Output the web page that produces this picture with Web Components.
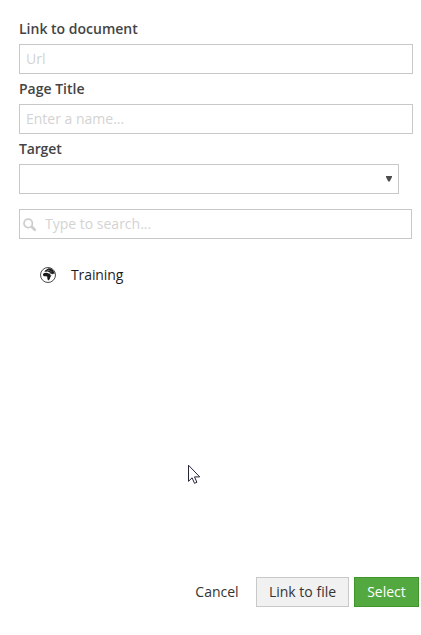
<!DOCTYPE html>
<html lang="en">
<head>
<meta charset="utf-8">
<title>Link picker</title>
<style>
html,body{margin:0;height:100%;background:#fff;overflow:hidden}
body{font:14px/20px "Open Sans","Noto Sans",sans-serif;color:#343434}
</style>
</head>
<body>
<link-dialog></link-dialog>
<script>
const define = (name, html) => customElements.define(name, class extends HTMLElement {
  constructor() {
    super();
    const t = document.createElement('template');
    t.innerHTML = html;
    this.attachShadow({mode: 'open'}).appendChild(t.content.cloneNode(true));
  }
  connectedCallback() {
    const input = this.shadowRoot.querySelector('input');
    if (input) input.placeholder = this.getAttribute('placeholder') || '';
  }
});
const inputCss = `
  input{display:block;box-sizing:border-box;width:100%;height:30px;margin:0;padding:0 6px 2px;border:1px solid #c8c8c8;
    border-radius:0;background:#fff;font:inherit;color:#343434;outline:0}
  input::placeholder{color:#d3d3d3;opacity:1}`;

define('form-field', `<style>
  :host{display:block;height:60px}
  .label{display:block;height:20px;margin-bottom:5px;font-weight:600;color:#444}
</style><span class="label"><slot name="label"></slot></span><slot></slot>`);

define('text-input', `<style>:host{display:block;width:394px}${inputCss}</style><input type="text">`);

define('select-box', `<style>
  :host{display:flex;box-sizing:border-box;width:380px;height:30px;border:1px solid #c8c8c8;align-items:center;justify-content:flex-end;padding-right:6px}
  svg{display:block}
</style><svg width="6" height="6" viewBox="0 0 6 6"><path d="M0 0H6V1L3.7 5.6H2.3L0 1Z" fill="#4c4c4c"/></svg>`);

define('search-input', `<style>
  :host{display:grid;width:393px;height:30px;align-items:center}
  input,svg{grid-area:1/1}
  ${inputCss}
  input{padding-left:25px}
  svg{margin-left:4px;z-index:1;margin-top:2px}
</style><input type="text"><svg width="14" height="14" viewBox="0 0 14 14" fill="none" stroke="#cdcdcd"><circle cx="5.2" cy="5.4" r="4.2" stroke-width="1.7"/><path d="M8.8 8.8L11.7 11.7" stroke-width="2.7" stroke-linecap="round"/></svg>`);

define('tree-item', `<style>
  :host{display:flex;align-items:center;height:20px;padding-left:21px;gap:15px;color:#1d1d1d}
  svg{display:block}
</style><svg width="16" height="16" viewBox="0 0 16 16">
  <circle cx="8" cy="8" r="7.5" fill="#fff" stroke="#4a4a4a" stroke-width="1"/>
  <path fill="#1a1a1a" d="M3 6.9L4.2 5.9L6.6 5.7L8.8 6.4L10 6.8L10.6 8.4L11.6 8.6L10.2 10.2L10 11.6L8.9 13.2L7.9 13.2L7.3 11.2L7.2 9.4L5.6 9.2L4 9.2L3 8.2Z"/>
  <path fill="#1a1a1a" d="M4.2 4.6L5.4 3.2L7 2.2L8.6 1.2L10.8 1.6L13 3.2L14.5 5.8L14.4 7.2L13.4 6.4L12.8 7.4L12 6.5L11 7.2L10 5.7L8.8 5L7.4 4.4L5.6 4.8Z"/>
  <path d="M7.5 3.5L9 3.2L9.8 4M10.2 4.8L11.6 4.9" stroke="#bbb" stroke-width=".6" fill="none"/>
</svg><span><slot></slot></span>`);

define('action-button', `<style>
  :host{display:block}
  button{display:block;box-sizing:border-box;width:100%;height:30px;margin:0;padding:0;border:1px solid transparent;background:none;font:inherit;color:#343434;line-height:28px;white-space:nowrap}
  :host([kind=default]) button{background:#f1f1f1;border-color:#c8c8c8}
  :host([kind=primary]) button{background:#53a93f;border-color:#3f962b;color:#fff}
</style><button type="button"><slot></slot></button>`);

define('mouse-pointer', `<style>:host{position:absolute;left:188px;top:464px}svg{display:block}</style>
<svg width="13" height="21" viewBox="0 0 13 21"><path d="M.5 1.2V17.3L4.1 13.8L6.5 19.3L8.9 18.3L6.5 12.9H11.7Z" fill="#fff" stroke="#25253a" stroke-width="1"/></svg>`);

define('link-dialog', `<style>
  :host{display:flex;flex-direction:column;box-sizing:border-box;height:635px;padding:19px 0 28px 19px;position:relative}
  search-input{margin-top:10px}
  tree-item{margin-top:26px;letter-spacing:-.1px}
  footer{display:flex;margin-top:auto;padding-left:163px}
  .cancel{width:70px;margin-right:4px}.file{width:93px;margin-right:5px}.ok{width:65px}
</style>
<form-field><span slot="label">Link to document</span><text-input placeholder="Url"></text-input></form-field>
<form-field><span slot="label">Page Title</span><text-input placeholder="Enter a name..."></text-input></form-field>
<form-field><span slot="label" style="letter-spacing:-.15px">Target</span><select-box></select-box></form-field>
<search-input placeholder="Type to search..."></search-input>
<tree-item>Training</tree-item>
<footer><action-button class="cancel">Cancel</action-button><action-button class="file" kind="default">Link to file</action-button><action-button class="ok" kind="primary">Select</action-button></footer>
<mouse-pointer></mouse-pointer>`);
</script>
</body>
</html>
